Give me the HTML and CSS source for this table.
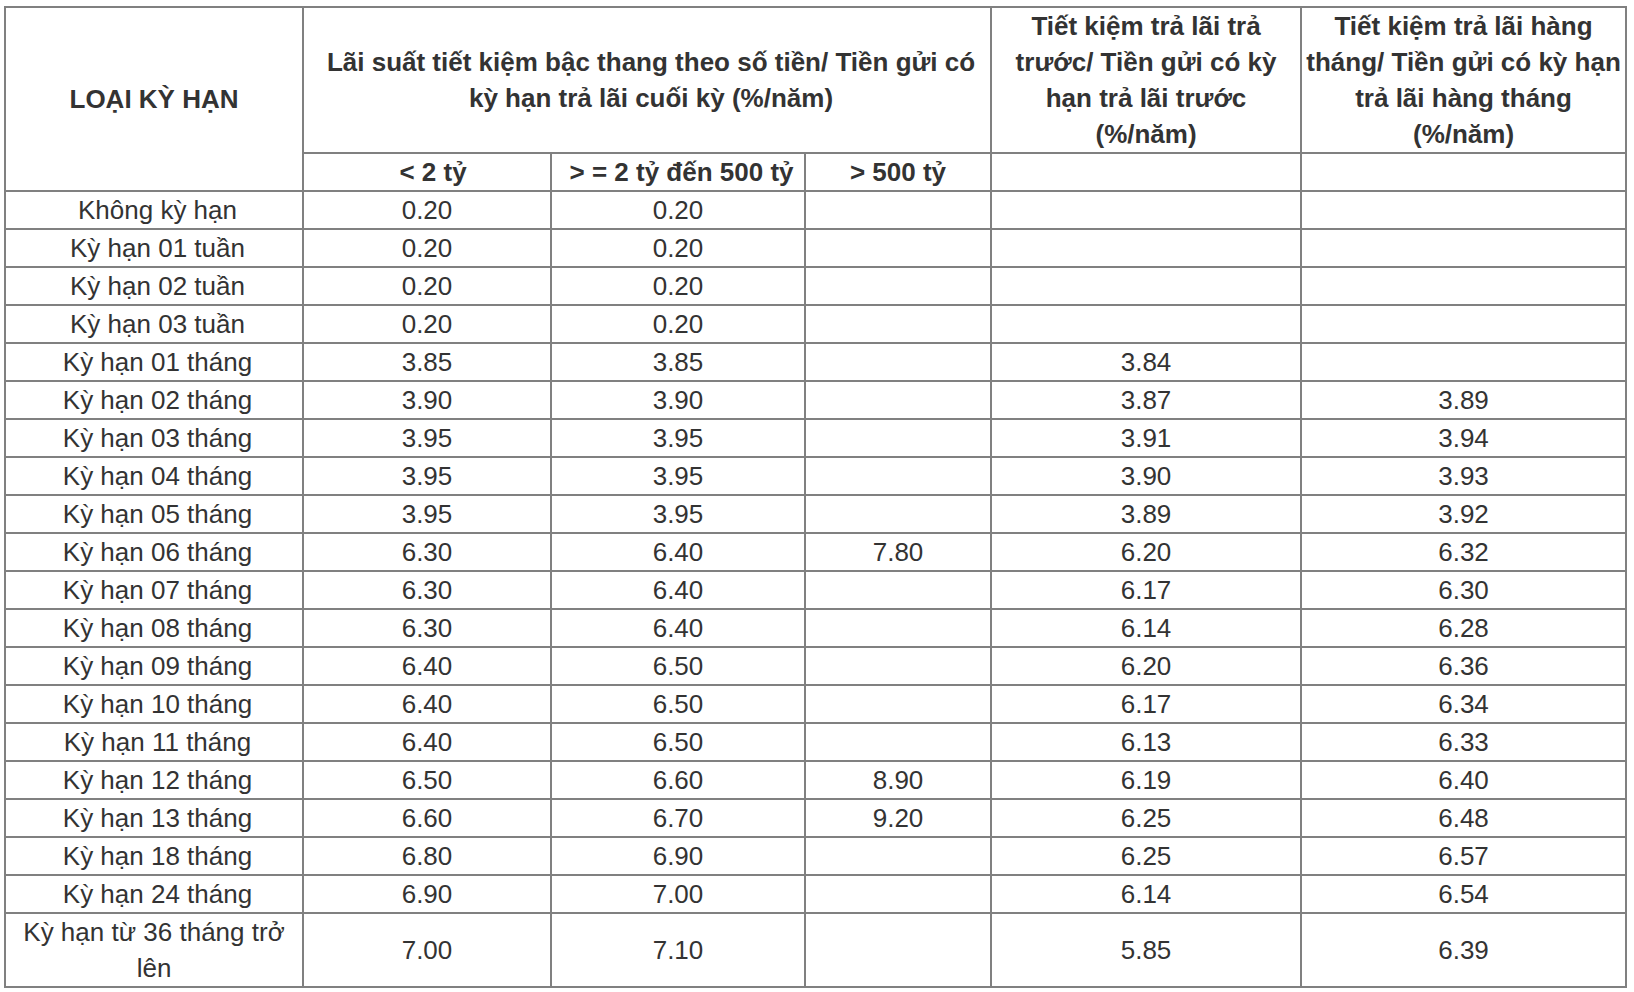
FILE: index.html
```html
<!DOCTYPE html>
<html lang="vi">
<head>
<meta charset="utf-8">
<title>Lãi suất tiết kiệm</title>
<link rel="stylesheet" href="styles.css">
</head>
<body>
<table class="rates">
  <colgroup>
    <col class="c1"><col class="c2"><col class="c3"><col class="c4"><col class="c5"><col class="c6">
  </colgroup>
  <thead>
    <tr>
      <th rowspan="2">LOẠI KỲ HẠN</th>
      <th colspan="3" class="group">Lãi suất tiết kiệm bậc thang theo số tiền/ Tiền gửi có kỳ hạn trả lãi cuối kỳ (%/năm)</th>
      <th>Tiết kiệm trả lãi trả trước/ Tiền gửi có kỳ hạn trả lãi trước (%/năm)</th>
      <th>Tiết kiệm trả lãi hàng tháng/ Tiền gửi có kỳ hạn trả lãi hàng tháng (%/năm)</th>
    </tr>
    <tr>
      <th class="sub-lt">&lt; 2 tỷ</th>
      <th class="sub-mid">&gt; = 2 tỷ đến 500 tỷ</th>
      <th>&gt; 500 tỷ</th>
      <th></th>
      <th></th>
    </tr>
  </thead>
  <tbody>
    <tr><td>Không kỳ hạn</td><td>0.20</td><td>0.20</td><td></td><td></td><td></td></tr>
    <tr><td>Kỳ hạn 01 tuần</td><td>0.20</td><td>0.20</td><td></td><td></td><td></td></tr>
    <tr><td>Kỳ hạn 02 tuần</td><td>0.20</td><td>0.20</td><td></td><td></td><td></td></tr>
    <tr><td>Kỳ hạn 03 tuần</td><td>0.20</td><td>0.20</td><td></td><td></td><td></td></tr>
    <tr><td>Kỳ hạn 01 tháng</td><td>3.85</td><td>3.85</td><td></td><td>3.84</td><td></td></tr>
    <tr><td>Kỳ hạn 02 tháng</td><td>3.90</td><td>3.90</td><td></td><td>3.87</td><td>3.89</td></tr>
    <tr><td>Kỳ hạn 03 tháng</td><td>3.95</td><td>3.95</td><td></td><td>3.91</td><td>3.94</td></tr>
    <tr><td>Kỳ hạn 04 tháng</td><td>3.95</td><td>3.95</td><td></td><td>3.90</td><td>3.93</td></tr>
    <tr><td>Kỳ hạn 05 tháng</td><td>3.95</td><td>3.95</td><td></td><td>3.89</td><td>3.92</td></tr>
    <tr><td>Kỳ hạn 06 tháng</td><td>6.30</td><td>6.40</td><td>7.80</td><td>6.20</td><td>6.32</td></tr>
    <tr><td>Kỳ hạn 07 tháng</td><td>6.30</td><td>6.40</td><td></td><td>6.17</td><td>6.30</td></tr>
    <tr><td>Kỳ hạn 08 tháng</td><td>6.30</td><td>6.40</td><td></td><td>6.14</td><td>6.28</td></tr>
    <tr><td>Kỳ hạn 09 tháng</td><td>6.40</td><td>6.50</td><td></td><td>6.20</td><td>6.36</td></tr>
    <tr><td>Kỳ hạn 10 tháng</td><td>6.40</td><td>6.50</td><td></td><td>6.17</td><td>6.34</td></tr>
    <tr><td>Kỳ hạn 11 tháng</td><td>6.40</td><td>6.50</td><td></td><td>6.13</td><td>6.33</td></tr>
    <tr><td>Kỳ hạn 12 tháng</td><td>6.50</td><td>6.60</td><td>8.90</td><td>6.19</td><td>6.40</td></tr>
    <tr><td>Kỳ hạn 13 tháng</td><td>6.60</td><td>6.70</td><td>9.20</td><td>6.25</td><td>6.48</td></tr>
    <tr><td>Kỳ hạn 18 tháng</td><td>6.80</td><td>6.90</td><td></td><td>6.25</td><td>6.57</td></tr>
    <tr><td>Kỳ hạn 24 tháng</td><td>6.90</td><td>7.00</td><td></td><td>6.14</td><td>6.54</td></tr>
    <tr class="long"><td>Kỳ hạn từ 36 tháng trở lên</td><td>7.00</td><td>7.10</td><td></td><td>5.85</td><td>6.39</td></tr>
  </tbody>
</table>
</body>
</html>
```

FILE: styles.css
```css
html, body {
  margin: 0;
  padding: 0;
  background: #ffffff;
}

body {
  padding: 6px 0 0 4px;
  font-family: "Liberation Sans", Arial, Helvetica, sans-serif;
  color: #333333;
}

.rates {
  border-collapse: collapse;
  table-layout: fixed;
  width: 1623px;
  border: 2px solid #333333;
  font-size: 26px;
  line-height: 36px;
}

.c1 { width: 298px; }
.c2 { width: 248px; }
.c3 { width: 254px; }
.c4 { width: 186px; }
.c5 { width: 310px; }
.c6 { width: 325px; }

.rates th,
.rates td {
  border: 2px solid #808080;
  padding: 0 2px;
  text-align: center;
  vertical-align: middle;
  height: 36px;
}

.rates th {
  font-weight: bold;
}

.rates td {
  font-weight: normal;
}

.rates td:first-child {
  padding-left: 9px;
}

.rates .long td:first-child {
  padding-left: 2px;
}

.rates .group {
  padding-left: 10px;
}

.rates .sub-lt {
  padding-left: 14px;
}

.rates .sub-mid {
  padding-left: 9px;
}
```
